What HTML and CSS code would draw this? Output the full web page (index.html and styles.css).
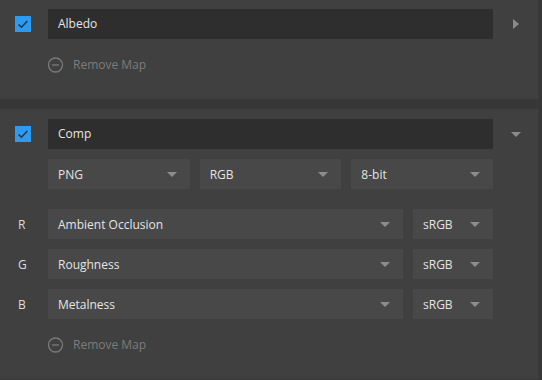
FILE: index.html
```html
<!DOCTYPE html>
<html>
<head>
<meta charset="utf-8">
<link rel="stylesheet" href="styles.css">
</head>
<body>
<div class="panels">
  <section class="panel panel-first">
    <div class="row">
      <div class="lead">
        <span class="check"><svg width="16" height="16" viewBox="0 0 16 16"><path d="M3.5 8.5 L6.5 11.2 L12.3 5" fill="none" stroke="#2a3746" stroke-width="1.6"/></svg></span>
      </div>
      <div class="field name">Albedo</div>
      <div class="tail"><span class="tri-right"></span></div>
    </div>
    <div class="row remove-row">
      <div class="lead"></div>
      <div class="remove">
        <svg width="16" height="16" viewBox="0 0 16 16"><circle cx="7.5" cy="8" r="7" fill="none" stroke="#7a7a7a" stroke-width="1.3"/><line x1="4" y1="8" x2="11" y2="8" stroke="#7a7a7a" stroke-width="1.3"/></svg>
        <span>Remove Map</span>
      </div>
    </div>
  </section>

  <section class="panel">
    <div class="row">
      <div class="lead">
        <span class="check"><svg width="16" height="16" viewBox="0 0 16 16"><path d="M3.5 8.5 L6.5 11.2 L12.3 5" fill="none" stroke="#2a3746" stroke-width="1.6"/></svg></span>
      </div>
      <div class="field name">Comp</div>
      <div class="tail"><span class="tri-down"></span></div>
    </div>
    <div class="row">
      <div class="lead"></div>
      <div class="formats">
        <div class="select"><span>PNG</span><span class="tri-down"></span></div>
        <div class="select"><span>RGB</span><span class="tri-down"></span></div>
        <div class="select"><span>8-bit</span><span class="tri-down"></span></div>
      </div>
    </div>
    <div class="channels">
      <div class="row">
        <div class="lead label">R</div>
        <div class="pair">
          <div class="select"><span>Ambient Occlusion</span><span class="tri-down"></span></div>
          <div class="select"><span>sRGB</span><span class="tri-down"></span></div>
        </div>
      </div>
      <div class="row">
        <div class="lead label">G</div>
        <div class="pair">
          <div class="select"><span>Roughness</span><span class="tri-down"></span></div>
          <div class="select"><span>sRGB</span><span class="tri-down"></span></div>
        </div>
      </div>
      <div class="row">
        <div class="lead label">B</div>
        <div class="pair">
          <div class="select"><span>Metalness</span><span class="tri-down"></span></div>
          <div class="select"><span>sRGB</span><span class="tri-down"></span></div>
        </div>
      </div>
    </div>
    <div class="row remove-row">
      <div class="lead"></div>
      <div class="remove">
        <svg width="16" height="16" viewBox="0 0 16 16"><circle cx="7.5" cy="8" r="7" fill="none" stroke="#7a7a7a" stroke-width="1.3"/><line x1="4" y1="8" x2="11" y2="8" stroke="#7a7a7a" stroke-width="1.3"/></svg>
        <span>Remove Map</span>
      </div>
    </div>
  </section>
</div>
</body>
</html>
```

FILE: styles.css
```css
html, body {
  margin: 0;
  padding: 0;
  background: #373737;
  font-family: "Open Sans", "Noto Sans", sans-serif;
  font-size: 12px;
  color: #e4e4e4;
  overflow: hidden;
}

.panels {
  display: flex;
  flex-direction: column;
  gap: 10px;
  width: 538px;
}

.panel {
  background: #404040;
  padding: 10px 0 20px;
  display: flex;
  flex-direction: column;
  gap: 10px;
}

.panel-first {
  padding-top: 9px;
}

.row {
  display: grid;
  grid-template-columns: 48px 445px 45px;
  height: 30px;
  align-items: center;
}

.lead {
  display: flex;
  align-items: center;
  padding-left: 15px;
  height: 30px;
}

.label {
  padding-left: 18px;
  color: #dcdcdc;
}

.check {
  width: 16px;
  height: 16px;
  background: #2d9bf4;
  display: block;
}

.check svg {
  display: block;
}

.field {
  height: 30px;
  line-height: 30px;
  padding-left: 10px;
  background: #2e2e2e;
}

.tail {
  display: flex;
  justify-content: center;
  align-items: center;
  padding-left: 1px;
}

.tri-right {
  width: 0;
  height: 0;
  border-top: 5px solid transparent;
  border-bottom: 5px solid transparent;
  border-left: 6px solid #8a8a8a;
}

.tri-down {
  width: 0;
  height: 0;
  border-left: 5px solid transparent;
  border-right: 5px solid transparent;
  border-top: 5px solid #8c8c8c;
}

.formats {
  display: grid;
  grid-template-columns: 1fr 1fr 1fr;
  gap: 10px;
}

.pair {
  display: grid;
  grid-template-columns: 355px 80px;
  gap: 10px;
}

.select {
  height: 30px;
  background: #484848;
  display: flex;
  align-items: center;
  justify-content: space-between;
  padding: 0 13px 0 10px;
}

.channels {
  margin-top: 10px;
  display: flex;
  flex-direction: column;
  gap: 10px;
}

.remove {
  display: flex;
  align-items: center;
  gap: 9px;
  color: #7c7c7c;
  padding-top: 1px;
}

.remove svg {
  display: block;
}
```
